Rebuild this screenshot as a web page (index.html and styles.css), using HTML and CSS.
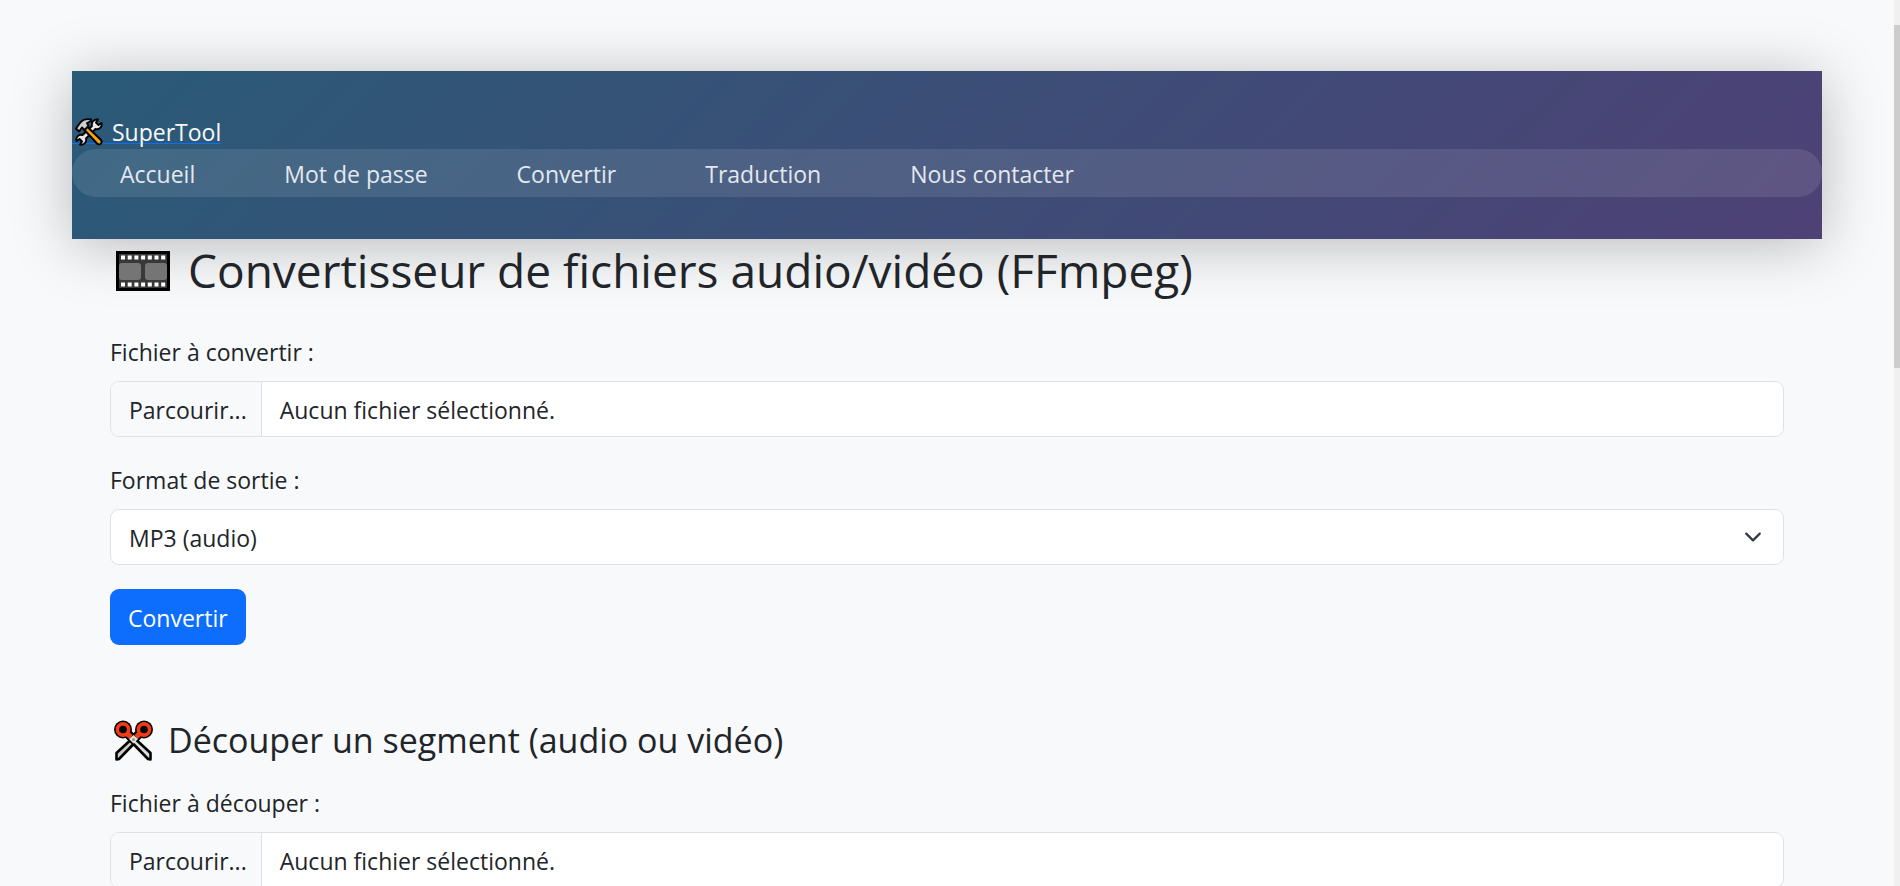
FILE: index.html
```html
<!DOCTYPE html>
<html lang="fr">
<head>
<meta charset="utf-8">
<title>SuperTool</title>
<link rel="stylesheet" href="styles.css">
</head>
<body>
<div class="page">
  <header class="site-header">
    <a class="brand" href="#"><svg class="brand-icon" viewBox="0 0 28 28" aria-hidden="true">
      <g stroke-linejoin="round">
        <path d="M17 8 C16 4 19 1 23 1.500 L21 4.500 L23.500 7 L26.500 5 C27.500 9 24 12 20.500 11 L11 20.500 C12 24 9 27.500 5 26.500 L7 23.500 L4.500 21 L1.500 23 C0.500 19 4 16 7.500 17Z" fill="#e6e6e6" stroke="#000" stroke-width="1.900"/>
        <path d="M9 11.500 L12 8.500 L26 22 Q27.500 24.500 25.500 26 Q23.500 27 22 25.500Z" fill="#f5a50c" stroke="#000" stroke-width="1.900"/>
        <path d="M4 13.500 L1 10.500 L5 5 Q9 0 16 1.500 L16 3 L12 5 L13.500 8 L9.500 12 L7 9.500Z" fill="#cfcfcf" stroke="#000" stroke-width="1.900"/>
      </g>
    </svg><span class="brand-name">SuperTool</span></a>
    <nav class="nav">
      <a href="#">Accueil</a>
      <a href="#">Mot de passe</a>
      <a href="#">Convertir</a>
      <a href="#">Traduction</a>
      <a href="#">Nous contacter</a>
    </nav>
  </header>
  <main class="content">
    <h1 class="title"><svg class="film-icon" viewBox="0 0 54 40" aria-hidden="true">
      <path fill="#000" d="M0 0h54v40H0z"/>
      <path fill="#383838" d="M3 3h48v34H3z"/>
      <path stroke="#fff" stroke-width="4" stroke-dasharray="4 2.700" d="M5 6.500h45M5 33.500h45"/>
      <rect x="3" y="12" width="22" height="17" rx="3" fill="#757575"/>
      <rect x="29" y="12" width="22" height="17" rx="3" fill="#757575"/>
    </svg>Convertisseur de fichiers audio/vidéo (FFmpeg)</h1>
    <form class="form">
      <div class="field">
        <label for="file-convert">Fichier à convertir :</label>
        <div class="control file">
          <span class="file-button">Parcourir...</span><span class="file-name">Aucun fichier sélectionné.</span>
          <input class="file-input" id="file-convert" type="file">
        </div>
      </div>
      <div class="field">
        <label for="format">Format de sortie :</label>
        <div class="select-wrap">
          <select class="control select" id="format"><option>MP3 (audio)</option></select>
          <svg class="chevron" viewBox="0 0 16 16" aria-hidden="true"><path fill="none" stroke="#343a40" stroke-linecap="round" stroke-linejoin="round" stroke-width="2" d="m2 5 6 6 6-6"/></svg>
        </div>
      </div>
      <button class="button" type="button">Convertir</button>
    </form>
    <h2 class="subtitle"><svg class="scissors-icon" viewBox="0 0 39 42" aria-hidden="true">
      <g stroke-linejoin="round">
        <circle cx="9" cy="9.500" r="9" fill="#000"/><circle cx="30" cy="9.500" r="9" fill="#000"/>
        <path d="M12 12 L19 19 M27 12 L20 19" stroke="#000" stroke-width="9"/>
        <path d="M22 15 L2.500 33 V39.500 L5 39 L24.500 19Z" fill="#cbcbc9" stroke="#000" stroke-width="2.600"/>
        <path d="M17 15 L36.500 33 V39.500 L34 39 L14.500 19Z" fill="#dededc" stroke="#000" stroke-width="2.600"/>
        <path d="M11 12 L17 17 M28 12 L22 17" stroke="#ef3d17" stroke-width="5"/>
        <circle cx="9" cy="9.500" r="5.600" fill="#000" stroke="#ef3d17" stroke-width="3.600"/>
        <circle cx="30" cy="9.500" r="5.600" fill="#000" stroke="#ef3d17" stroke-width="3.600"/>
        <path d="M15 19 L19.500 15 L24 19 L19.500 23.500Z" fill="#dededc"/>
        <circle cx="19.500" cy="19.500" r="1.500" fill="#999"/>
      </g>
    </svg>Découper un segment (audio ou vidéo)</h2>
    <form class="form">
      <div class="field">
        <label for="file-cut">Fichier à découper :</label>
        <div class="control file">
          <span class="file-button">Parcourir...</span><span class="file-name">Aucun fichier sélectionné.</span>
          <input class="file-input" id="file-cut" type="file">
        </div>
      </div>
    </form>
  </main>
</div>
<div class="scrollbar" aria-hidden="true"><div class="scrollbar-thumb"></div></div>
</body>
</html>
```
FILE: styles.css
```css
* { box-sizing: border-box; }
html { height: 100%; }
body {
  display: flex;
  height: 100%;
  margin: 0;
  overflow: hidden;
  background: #f8f9fb;
  color: #212529;
  font: 23px/36px "Open Sans", "Noto Sans", sans-serif;
}
.page { flex: 1; min-width: 0; padding: 71px 72px 0; }
.site-header {
  padding: 42px 0;
  background: linear-gradient(135deg, #2a5a78, #4e4175);
  box-shadow: 0 6px 60px rgba(0, 0, 0, .26);
}
.brand {
  display: flex;
  width: fit-content;
  color: #f8f9fa;
  text-decoration: none;
  background: linear-gradient(#0d6efd, #0d6efd) 0 30px / 100% 1px no-repeat;
}
.brand-icon { width: 28px; height: 28px; margin: 5px 9px 0 3px; }
.brand-name { line-height: 38px; height: 36px; }
.nav {
  display: flex;
  gap: 89px;
  padding: 7px 48px 5px;
  border-radius: 24px;
  background: rgba(255, 255, 255, .1);
}
.nav a { color: #e4e8ee; text-decoration: none; }
.content { position: relative; padding: 0 38px; }
.title, .subtitle { display: flex; margin: 0; font-weight: 400; }
.title { height: 58px; margin-bottom: 36px; font-size: 46px; line-height: 62px; }
.subtitle { height: 43px; margin: 72px 0 24px; font-size: 34px; line-height: 46px; }
.film-icon { width: 54px; height: 40px; margin: 12px 18px 0 6px; }
.scissors-icon { width: 39px; height: 42px; margin: 3px 15px 0 4px; }
.field { margin-bottom: 24px; }
.field label { display: block; padding-top: 1px; margin-bottom: 11px; }
.control {
  width: 100%;
  height: 56px;
  border: 1px solid #dee2e6;
  border-radius: 9px;
  background: #fff;
  color: inherit;
  font: inherit;
}
.file { position: relative; display: flex; overflow: hidden; }
.file-button {
  padding: 10px 14px 8px 18px;
  border-right: 1px solid #dee2e6;
  background: #f8f9fa;
}
.file-name { padding: 10px 18px 8px; }
.file-input { position: absolute; inset: 0; width: 100%; opacity: 0; }
.select-wrap { position: relative; }
.select { display: block; padding: 10px 18px 8px; appearance: none; }
.chevron { position: absolute; top: 19px; right: 22px; width: 18px; height: 18px; pointer-events: none; }
.button {
  display: block;
  height: 56px;
  padding: 10px 18px 8px;
  border: 0;
  border-radius: 9px;
  background: #0d6efd;
  color: #fff;
  font: inherit;
}
.scrollbar { width: 6px; padding-top: 25px; background: #f0f0f0; }
.scrollbar-thumb { height: 343px; background: #cdcdcd; }
```
